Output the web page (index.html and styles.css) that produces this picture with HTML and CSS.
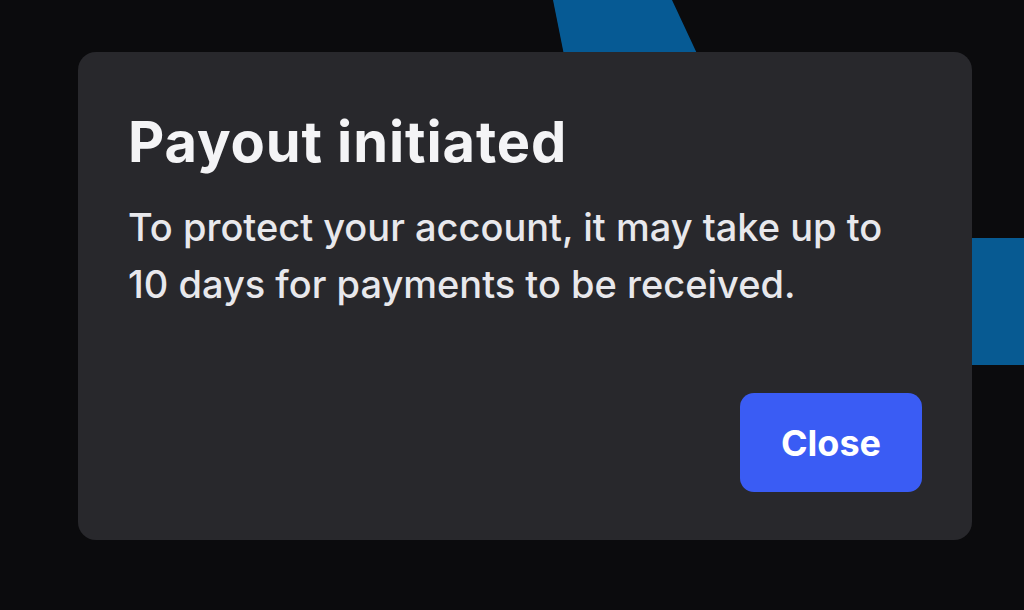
FILE: index.html
```html
<!DOCTYPE html>
<html lang="en">
<head>
<meta charset="utf-8">
<title>Payout initiated</title>
<link rel="stylesheet" href="styles.css">
</head>
<body>
<div class="backdrop" aria-hidden="true">
  <svg class="art" width="1024" height="610" viewBox="0 0 1024 610">
    <polygon points="553,0 672,0 700,60 565,60" fill="#065a94"/>
    <rect x="960" y="238" width="70" height="127" fill="#075a92"/>
  </svg>
</div>
<div class="dialog" role="dialog" aria-labelledby="dlg-title">
  <h1 class="dialog-title" id="dlg-title">Payout initiated</h1>
  <p class="dialog-text">To protect your account, it may take up to 10 days for payments to be received.</p>
  <div class="dialog-actions">
    <button class="btn-primary" type="button">Close</button>
  </div>
</div>
</body>
</html>
```
FILE: styles.css
```css
* { box-sizing: border-box; }
html, body {
  margin: 0;
  padding: 0;
  width: 1024px;
  height: 610px;
  overflow: hidden;
  background: #0b0b0d;
  font-family: Inter, "Noto Sans", sans-serif;
}
body {
  position: relative;
  padding: 52px 0 0 78px;
}
.backdrop {
  position: absolute;
  left: 0;
  top: 0;
  width: 1024px;
  height: 610px;
  z-index: 0;
}
.art { display: block; }
.dialog {
  position: relative;
  z-index: 1;
  width: 894px;
  height: 488px;
  background: #28282c;
  border-radius: 18px;
  padding: 59px 50px 48px 50px;
  display: flex;
  flex-direction: column;
}
.dialog-title {
  margin: 0;
  font-size: 56px;
  line-height: 62px;
  font-weight: 700;
  color: #f4f4f6;
  letter-spacing: 0.9px;
}
.dialog-text {
  margin: 26px 0 0 0;
  font-size: 38px;
  line-height: 57px;
  font-weight: 500;
  color: #e8e8ec;
  max-width: 780px;
  letter-spacing: 0;
}
.dialog-actions {
  margin-top: auto;
  display: flex;
  justify-content: flex-end;
}
.btn-primary {
  width: 182px;
  height: 99px;
  border: none;
  border-radius: 14px;
  background: #3a5cf4;
  color: #ffffff;
  font-family: Inter, "Noto Sans", sans-serif;
  font-size: 36px;
  font-weight: 700;
  cursor: pointer;
}
```
